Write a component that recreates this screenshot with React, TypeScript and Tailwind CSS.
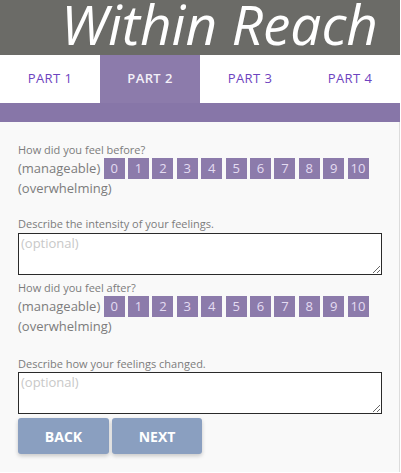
import React from "react";

const tabs = ["PART 1", "PART 2", "PART 3", "PART 4"];
const scale = [0, 1, 2, 3, 4, 5, 6, 7, 8, 9, 10];

// ── Rating scale row (inline flow, wraps the end label) ─────────────────
function Scale() {
  return (
    <div className="text-[13px] leading-[18px] text-[#7c7c7c]">
      (manageable){" "}
      {scale.map((n) => (
        <React.Fragment key={n}>
          <span className="inline-block w-[21px] h-[21px] leading-[21px] text-center bg-[#8c7bab] text-[#e4dcf2] align-baseline">
            {n}
          </span>{" "}
        </React.Fragment>
      ))}
      (overwhelming)
    </div>
  );
}

function Notes({ className }: { className?: string }) {
  return (
    <textarea
      placeholder="(optional)"
      className={
        "block w-[364px] h-[42px] border-[1.5px] border-[#2a2a2a] bg-white px-[2px] py-0 text-[13px] leading-[18px] text-[#555] placeholder:text-[#c8c8c8] outline-none " +
        (className ?? "")
      }
    />
  );
}

export default function App() {
  return (
    <div className="w-[400px] font-['Open_Sans',sans-serif] bg-white">
      {/* ── Header ─────────────────────────────────────────────── */}
      <div className="h-[55px] bg-[#6b6b67] overflow-hidden">
        <div className="pl-[61px] text-[55px] leading-[48px] italic text-white">
          Within Reach
        </div>
      </div>

      {/* ── Tabs ───────────────────────────────────────────────── */}
      <div className="flex h-[48px] bg-white">
        {tabs.map((t, i) => (
          <div
            key={t}
            className={
              i === 1
                ? "flex-1 flex items-center justify-center bg-[#8c7bab] text-[13px] font-semibold tracking-[0.4px] text-[#f3f0f8]"
                : "flex-1 flex items-center justify-center text-[13px] tracking-[0.4px] text-[#6d43c0]"
            }
          >
            {t}
          </div>
        ))}
      </div>
      <div className="h-[19px] bg-[#8776a8]" />

      {/* ── Form ───────────────────────────────────────────────── */}
      <div className="bg-[#f9f9f9] border-r border-[#dcdcdc] pl-[18px] pt-[20px] pb-[18px]">
        <p className="text-[11px] leading-[16px] text-[#7c7c7c]">How did you feel before?</p>
        <Scale />
        <p className="mt-[19px] text-[11px] leading-[16px] text-[#7c7c7c]">
          Describe the intensity of your feelings.
        </p>
        <Notes className="mt-[1px]" />

        <p className="mt-[5px] text-[11px] leading-[16px] text-[#7c7c7c]">How did you feel after?</p>
        <Scale />
        <p className="mt-[21px] text-[11px] leading-[16px] text-[#7c7c7c]">
          Describe how your feelings changed.
        </p>
        <Notes />

        <div className="flex gap-[3px] mt-[4px]">
          <button className="w-[91px] h-[36px] rounded-[3px] bg-[#8a9fc0] text-white text-[14px] font-bold shadow-[0_2px_4px_rgba(0,0,0,0.2)]">
            BACK
          </button>
          <button className="w-[90px] h-[36px] rounded-[3px] bg-[#8a9fc0] text-white text-[14px] font-bold shadow-[0_2px_4px_rgba(0,0,0,0.2)]">
            NEXT
          </button>
        </div>
      </div>
    </div>
  );
}
